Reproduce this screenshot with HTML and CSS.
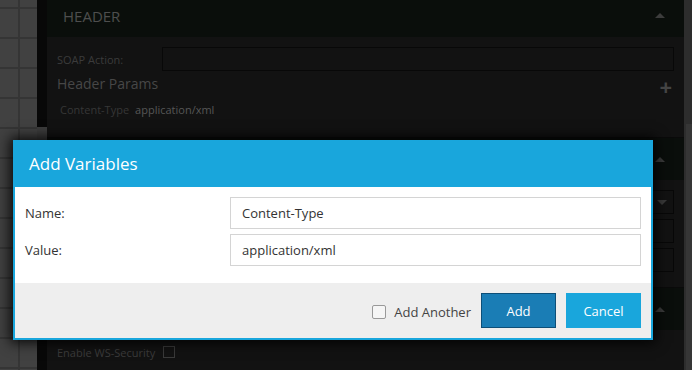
FILE: index.html
```html
<!DOCTYPE html>
<html>
<head>
<meta charset="utf-8">
<link rel="stylesheet" href="styles.css">
</head>
<body>
<div class="page">
  <div class="grid"></div>
  <div class="edge"></div>
  <div class="panel">
    <section class="sec sec1">
      <div class="sec-head first"><span class="sec-title">HEADER</span><span class="caret-up"></span></div>
      <div class="sec-body body1">
        <div class="soap-row"><span class="soap-label">SOAP Action:</span><span class="dark-input"></span></div>
        <div class="params-row"><span class="params-title">Header Params</span><span class="plus">+</span></div>
        <div class="ct-row"><span class="ct-key">Content-Type</span><span class="ct-val">application/xml</span></div>
      </div>
    </section>
    <section class="sec">
      <div class="sec-head"><span class="sec-title"></span><span class="caret-up"></span></div>
      <div class="sec-body body2">
        <div class="dark-select"><span class="caret-down"></span></div>
        <div class="dark-box"></div>
        <div class="dark-box"></div>
      </div>
    </section>
    <section class="sec">
      <div class="sec-head"><span class="sec-title"></span><span class="caret-up"></span></div>
      <div class="sec-body body3">
        <span class="soap-label">Enable WS-Security</span><span class="dark-check"></span>
      </div>
    </section>
  </div>
  <div class="scroll"><div class="thumb"></div></div>
</div>

<div class="dialog">
  <div class="dlg-title">Add Variables</div>
  <div class="dlg-body">
    <div class="field"><span class="field-label">Name:</span><span class="field-input">Content-Type</span></div>
    <div class="field"><span class="field-label">Value:</span><span class="field-input">application/xml</span></div>
  </div>
  <div class="dlg-foot">
    <label class="another"><span class="cb"></span>Add Another</label>
    <button class="btn btn-add">Add</button>
    <button class="btn btn-cancel">Cancel</button>
  </div>
</div>
</body>
</html>
```

FILE: styles.css
```css
* { box-sizing: border-box; }
html, body { margin: 0; padding: 0; }
body {
  width: 692px;
  height: 370px;
  overflow: hidden;
  font-family: "Open Sans", "Noto Sans", sans-serif;
  background: #121212;
  position: relative;
}
.page {
  display: flex;
  height: 370px;
}
.grid {
  width: 37px;
  flex: none;
  background-color: #414141;
  background-image:
    linear-gradient(to bottom, #353535 2px, transparent 2px),
    linear-gradient(to right, #353535 2px, transparent 2px);
  background-size: 30px 30px, 30px 30px;
  background-position: 0 7px, 18px 0;
}
.edge {
  width: 10px;
  flex: none;
  background: linear-gradient(to bottom, #080808 0, #080808 127px, #3d3d3d 127px, #3d3d3d 340px, #080808 340px);
}
.panel {
  flex: 1;
  background: #121212;
  display: flex;
  flex-direction: column;
}
.scroll {
  width: 8px;
  flex: none;
  background: #2d2d2d;
  padding-top: 124px;
  padding-left: 2px;
}
.thumb {
  height: 246px;
  background: #363636;
}
.sec-head {
  height: 43px;
  background: #0a0e0b;
  border-top: 1px solid #0a0a0a;
  display: flex;
  align-items: center;
  justify-content: space-between;
  padding: 0 19px 0 16px;
}
.sec-head.first {
  height: 37px;
  border-top: none;
  padding-bottom: 6px;
}
.sec-title {
  color: #4e4e4e;
  font-size: 15px;
  letter-spacing: 0;
}
.caret-up {
  width: 0; height: 0;
  border-left: 5px solid transparent;
  border-right: 5px solid transparent;
  border-bottom: 5px solid #3c3c3c;
}
.sec-body { padding: 0 10px; }
.body1 { height: 100px; padding-top: 10px; }
.soap-row {
  display: flex;
  align-items: center;
  height: 24px;
}
.soap-label {
  color: #3b3b3b;
  font-size: 11px;
  width: 105px;
}
.dark-input {
  flex: 1;
  height: 24px;
  border: 1px solid #080808;
}
.params-row {
  display: flex;
  align-items: center;
  justify-content: space-between;
  height: 24px;
  padding-top: 1px;
}
.params-title {
  color: #474747;
  font-size: 14px;
}
.plus {
  color: #444;
  font-size: 22px;
  font-weight: bold;
  line-height: 1;
  margin-right: 2px;
  margin-top: 4px;
}
.ct-row {
  height: 28px;
  display: flex;
  align-items: center;
  padding-left: 3px;
  gap: 6px;
  font-size: 11px;
}
.ct-key { color: #363636; }
.ct-val { color: #565656; }
.body2 {
  height: 107px;
  padding-top: 10px;
  display: flex;
  flex-direction: column;
  align-items: flex-end;
  gap: 5px;
}
.dark-select, .dark-box {
  width: 300px;
  height: 24px;
  border: 1px solid #080808;
  display: flex;
  align-items: center;
  justify-content: flex-end;
  padding-right: 6px;
}
.caret-down {
  width: 0; height: 0;
  border-left: 5px solid transparent;
  border-right: 5px solid transparent;
  border-top: 5px solid #3a3a3a;
}
.body3 {
  height: 40px;
  display: flex;
  align-items: center;
  padding-top: 4px;
}
.dark-check {
  width: 12px;
  height: 12px;
  border: 1px solid #3a3a3a;
  margin-left: 1px;
}

/* dialog */
.dialog {
  position: absolute;
  left: 13px;
  top: 140px;
  width: 640px;
  height: 200px;
  border: 2px solid #19a6dc;
  border-top: none;
  background: #fff;
  box-shadow: 0 0 12px 3px rgba(0,0,0,0.85);
  display: flex;
  flex-direction: column;
}
.dlg-title {
  height: 47px;
  background: #19a6dc;
  color: #fff;
  font-size: 17px;
  display: flex;
  align-items: center;
  margin: 0 -2px;
  padding-left: 16px;
}
.dlg-body {
  height: 96px;
  padding: 10px 10px 0 10px;
  display: flex;
  flex-direction: column;
  gap: 5px;
}
.field {
  display: flex;
  align-items: center;
  height: 32px;
}
.field-label {
  width: 205px;
  color: #333;
  font-size: 13px;
}
.field-input {
  flex: 1;
  height: 32px;
  border: 1px solid #d4d4d4;
  display: flex;
  align-items: center;
  padding-left: 11px;
  font-size: 13px;
  color: #333;
}
.dlg-foot {
  flex: 1;
  background: #eeeeee;
  display: flex;
  align-items: center;
  justify-content: flex-end;
  padding: 0 10px 0 0;
}
.another {
  display: flex;
  align-items: center;
  color: #444;
  font-size: 13px;
  margin-right: 10px;
  margin-top: 3px;
}
.cb {
  width: 14px;
  height: 14px;
  border: 1px solid #999;
  border-radius: 2px;
  background: #f5f5f5;
  margin-right: 8px;
}
.btn {
  width: 75px;
  height: 35px;
  font-family: inherit;
  font-size: 13px;
  color: #fff;
  border: 1px solid transparent;
  padding: 0;
}
.btn-add {
  background: #1a7db5;
  border-color: #0d4f78;
  margin-right: 10px;
}
.btn-cancel {
  background: #19a6dc;
  border-color: #19a6dc;
}
```
